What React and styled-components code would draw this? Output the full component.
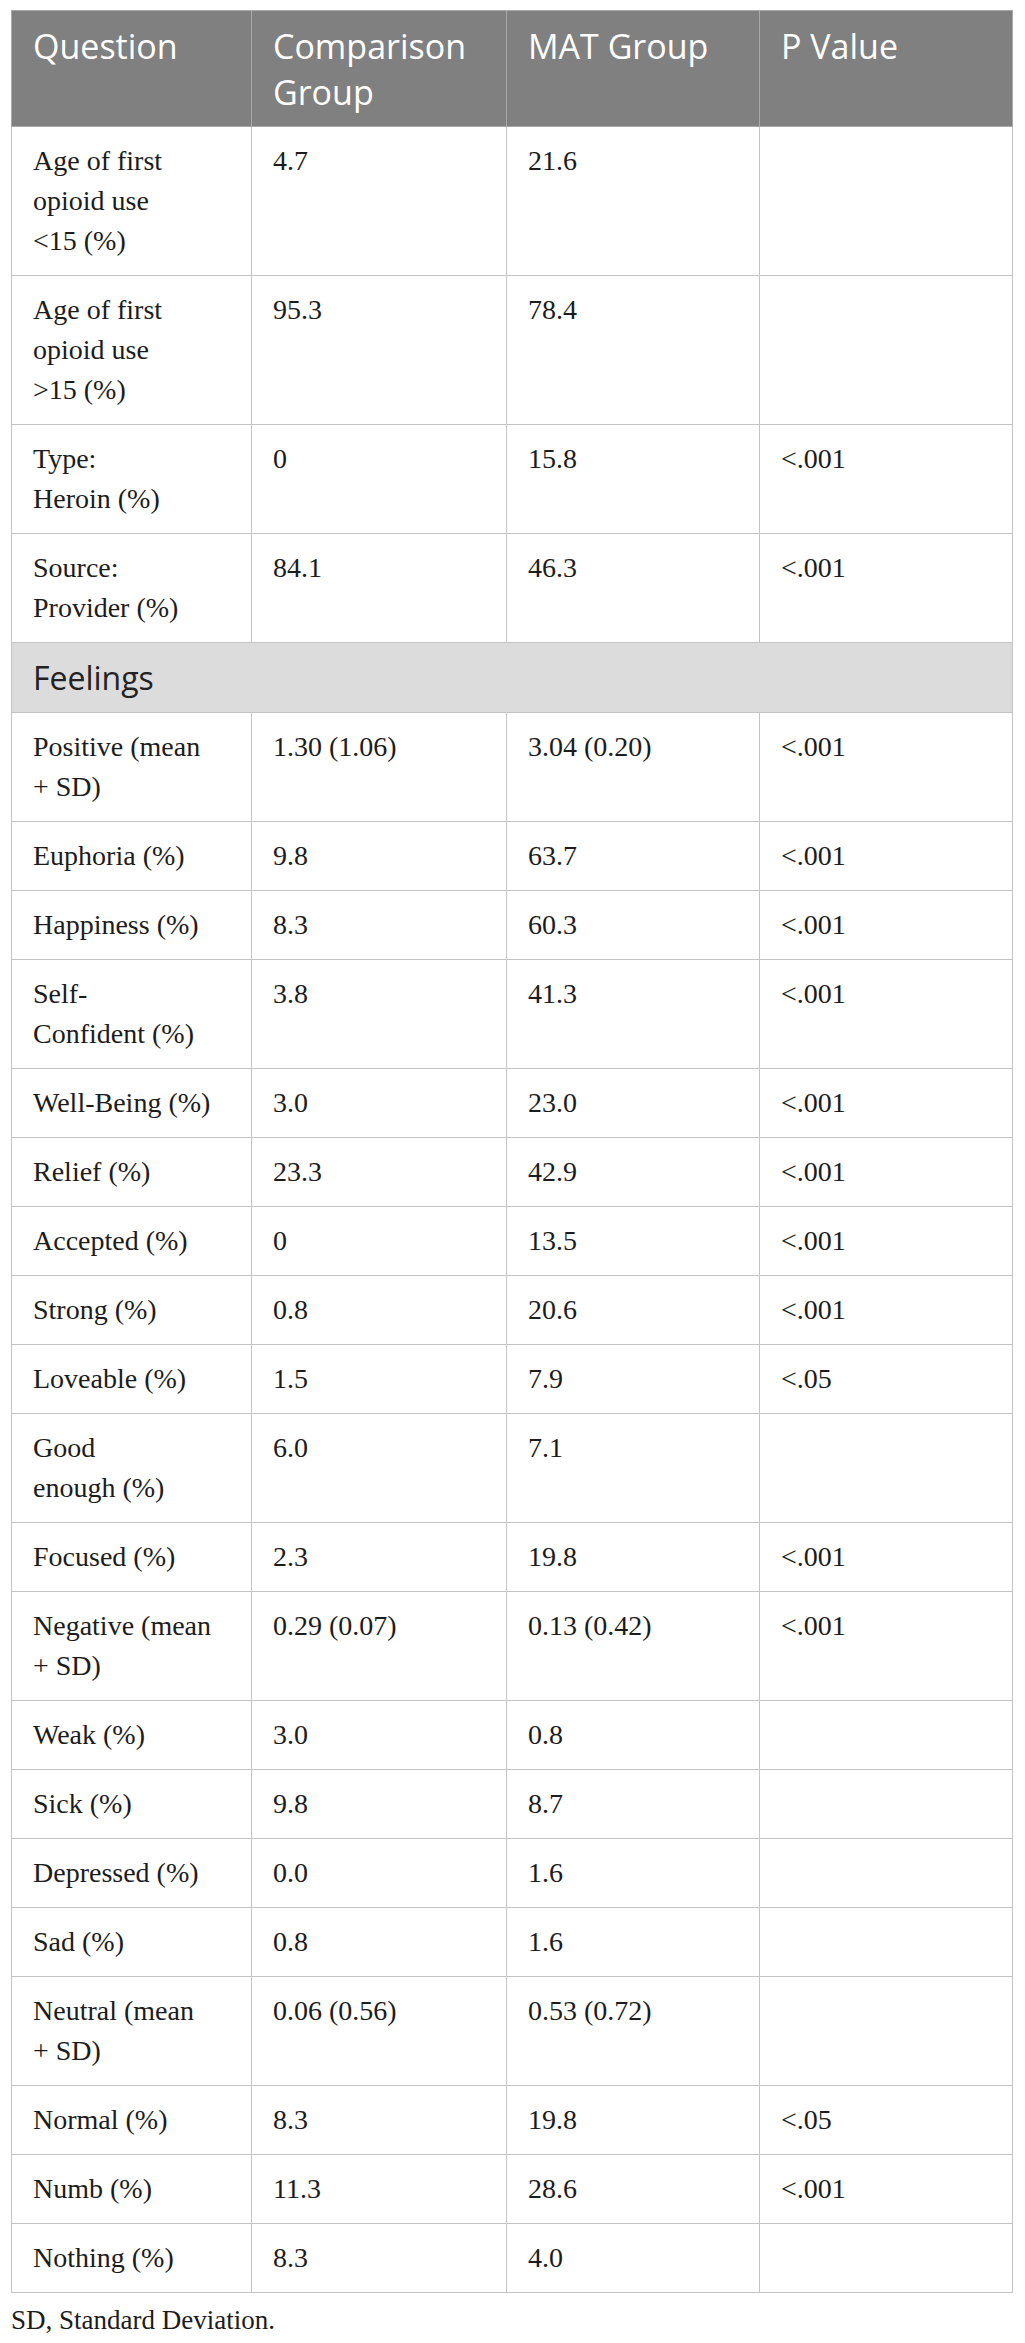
import React from "react";
import styled, { createGlobalStyle } from "styled-components";

const Global = createGlobalStyle`
  html, body { margin: 0; padding: 0; background: #ffffff; }
  body { font-family: "Liberation Serif", "Times New Roman", serif; color: #1c1c1c; }
`;

const Page = styled.div`
  padding: 10px 13px 16px 11px;
`;

const Table = styled.table`
  width: 1001px;
  border-collapse: collapse;
  table-layout: fixed;
  font-family: "Liberation Serif", "Times New Roman", serif;
`;

const HeadCell = styled.th`
  background: #808080;
  color: #ffffff;
  font-family: "Open Sans", "Lato", sans-serif;
  font-weight: 400;
  font-size: 34px;
  line-height: 46px;
  text-align: left;
  vertical-align: top;
  padding: 12px 20px 11px 21px;
  border: 1px solid #a9a9a9;
`;

const Cell = styled.td`
  font-size: 28px;
  line-height: 40px;
  color: #1c1c1c;
  text-align: left;
  vertical-align: top;
  padding: 14px 20px 14px 21px;
  border: 1px solid #c4c4c4;
`;

const SectionCell = styled.td`
  background: #dcdcdc;
  font-family: "Open Sans", "Lato", sans-serif;
  font-size: 32px;
  line-height: 40px;
  color: #222222;
  padding: 15px 20px 14px 21px;
  border: 1px solid #c4c4c4;
`;

const Note = styled.p`
  margin: 9px 0 0 0;
  font-size: 27px;
  line-height: 36px;
  color: #1c1c1c;
`;

const top = [
  [["Age of first", "opioid use", "<15 (%)"], "4.7", "21.6", ""],
  [["Age of first", "opioid use", ">15 (%)"], "95.3", "78.4", ""],
  [["Type:", "Heroin (%)"], "0", "15.8", "<.001"],
  [["Source:", "Provider (%)"], "84.1", "46.3", "<.001"],
];

const feelings = [
  [["Positive (mean", "+ SD)"], "1.30 (1.06)", "3.04 (0.20)", "<.001"],
  [["Euphoria (%)"], "9.8", "63.7", "<.001"],
  [["Happiness (%)"], "8.3", "60.3", "<.001"],
  [["Self-", "Confident (%)"], "3.8", "41.3", "<.001"],
  [["Well-Being (%)"], "3.0", "23.0", "<.001"],
  [["Relief (%)"], "23.3", "42.9", "<.001"],
  [["Accepted (%)"], "0", "13.5", "<.001"],
  [["Strong (%)"], "0.8", "20.6", "<.001"],
  [["Loveable (%)"], "1.5", "7.9", "<.05"],
  [["Good", "enough (%)"], "6.0", "7.1", ""],
  [["Focused (%)"], "2.3", "19.8", "<.001"],
  [["Negative (mean", "+ SD)"], "0.29 (0.07)", "0.13 (0.42)", "<.001"],
  [["Weak (%)"], "3.0", "0.8", ""],
  [["Sick (%)"], "9.8", "8.7", ""],
  [["Depressed (%)"], "0.0", "1.6", ""],
  [["Sad (%)"], "0.8", "1.6", ""],
  [["Neutral (mean", "+ SD)"], "0.06 (0.56)", "0.53 (0.72)", ""],
  [["Normal (%)"], "8.3", "19.8", "<.05"],
  [["Numb (%)"], "11.3", "28.6", "<.001"],
  [["Nothing (%)"], "8.3", "4.0", ""],
];

function Lines({ lines }) {
  return lines.map((l, i) => (
    <React.Fragment key={i}>
      {i > 0 && <br />}
      {l}
    </React.Fragment>
  ));
}

function Row({ row }) {
  const [q, a, b, p] = row;
  return (
    <tr>
      <Cell><Lines lines={q} /></Cell>
      <Cell>{a}</Cell>
      <Cell>{b}</Cell>
      <Cell>{p}</Cell>
    </tr>
  );
}

export default function App() {
  return (
    <Page>
      <Global />
      <Table>
        <colgroup>
          <col style={{ width: 240 }} />
          <col style={{ width: 255 }} />
          <col style={{ width: 253 }} />
          <col style={{ width: 253 }} />
        </colgroup>
        <thead>
          <tr>
            <HeadCell>Question</HeadCell>
            <HeadCell>Comparison<br />Group</HeadCell>
            <HeadCell>MAT Group</HeadCell>
            <HeadCell>P Value</HeadCell>
          </tr>
        </thead>
        <tbody>
          {top.map((r, i) => <Row key={"t" + i} row={r} />)}
          <tr>
            <SectionCell colSpan={4}>Feelings</SectionCell>
          </tr>
          {feelings.map((r, i) => <Row key={"f" + i} row={r} />)}
        </tbody>
      </Table>
      <Note>SD, Standard Deviation.</Note>
    </Page>
  );
}
